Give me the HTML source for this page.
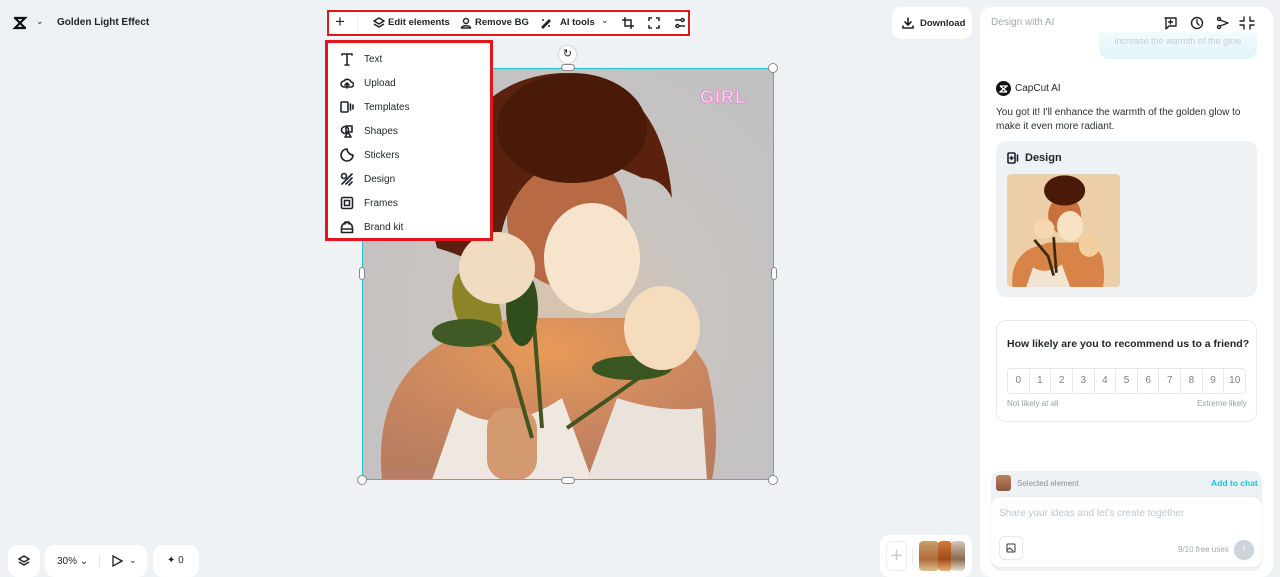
<!DOCTYPE html>
<html><head><meta charset="utf-8"><style>
*{box-sizing:border-box;margin:0;padding:0}
body{width:1280px;height:577px;background:#eff2f5;font-family:"Liberation Sans",sans-serif;position:relative;overflow:hidden;color:#1f2329}
.abs{position:absolute}
.card{background:#fff;border-radius:10px}
.ic{stroke:#1f2329;fill:none;stroke-width:1.6;stroke-linecap:round;stroke-linejoin:round}
.menu div{display:flex;align-items:center;height:24px;font-size:10px;padding-left:12px}
.menu svg{width:14px;height:14px;margin-right:10px}
.nums{display:flex;border:1px solid #e6e8eb;border-radius:4px;height:26px}
.nums span{flex:1;border-left:1px solid #e6e8eb;text-align:center;line-height:24px;font-size:10px;color:#7a8089}
.nums span:first-child{border-left:none}
.tb{position:absolute;top:17px;font-size:9.5px;font-weight:bold;white-space:nowrap}
</style></head><body>

<!-- top-left -->
<div class="abs" style="left:2px;top:8px;width:148px;height:31px;background:#eef1f4;border-radius:8px"></div>
<svg class="abs" style="left:12px;top:16px" width="16" height="14" viewBox="0 0 16 14"><path d="M2 2h11L3 12h11M3 2l10 10" stroke="#111" stroke-width="2.2" fill="none"/></svg>
<div class="abs" style="left:36px;top:16px;font-size:9px">&#8964;</div>
<div class="abs" style="left:57px;top:17px;font-size:10px;font-weight:bold">Golden Light Effect</div>

<!-- toolbar -->
<div class="abs card" style="left:326px;top:9px;width:366px;height:29px;border-radius:8px"></div>
<div class="abs" style="left:327px;top:10px;width:363px;height:26px;border:2px solid #e5151b"></div>
<div class="abs" style="left:357px;top:13px;width:1px;height:20px;background:#eef0f2"></div>
<div class="abs" style="left:335px;top:12px;font-size:17px">+</div>
<svg class="abs" style="left:373px;top:17px" width="12" height="12" viewBox="0 0 12 12" class="ic"><path d="M6 1l5 3-5 3-5-3zM1 7l5 3 5-3" stroke="#1f2329" stroke-width="1.5" fill="none"/></svg>
<div class="tb" style="left:388px">Edit elements</div>
<svg class="abs" style="left:460px;top:17px" width="12" height="12" viewBox="0 0 12 12"><circle cx="6" cy="4" r="2.5" stroke="#1f2329" stroke-width="1.4" fill="none"/><path d="M1.5 11c0-3 9-3 9 0z" stroke="#1f2329" stroke-width="1.4" fill="none"/></svg>
<div class="tb" style="left:475px">Remove BG</div>
<svg class="abs" style="left:540px;top:17px" width="12" height="12" viewBox="0 0 12 12"><path d="M2 10l7-7 1 1-7 7zM2 3h2M8 9h2" stroke="#1f2329" stroke-width="1.4" fill="none"/></svg>
<div class="tb" style="left:560px">AI tools</div>
<div class="abs" style="left:601px;top:15px;font-size:9px">&#8964;</div>
<svg class="abs" style="left:622px;top:17px" width="12" height="12" viewBox="0 0 12 12"><path d="M3 0v9h9M0 3h9v9" stroke="#1f2329" stroke-width="1.5" fill="none"/></svg>
<svg class="abs" style="left:648px;top:17px" width="12" height="12" viewBox="0 0 12 12"><path d="M1 4V1h3M8 1h3v3M11 8v3H8M4 11H1V8" stroke="#1f2329" stroke-width="1.5" fill="none"/></svg>
<svg class="abs" style="left:674px;top:17px" width="12" height="12" viewBox="0 0 12 12"><path d="M1 3h6M10 3h1M1 9h1M5 9h6" stroke="#1f2329" stroke-width="1.4" fill="none"/><circle cx="8.5" cy="3" r="1.5" stroke="#1f2329" stroke-width="1.4" fill="none"/><circle cx="3.5" cy="9" r="1.5" stroke="#1f2329" stroke-width="1.4" fill="none"/></svg>

<!-- canvas image -->
<div class="abs" style="left:420px;top:48px;font-size:8px;color:#b0b5bb">age.png</div>
<svg class="abs" style="left:362px;top:68px" width="412" height="412" viewBox="0 0 412 412">
<defs><radialGradient id="bg" cx="0.5" cy="0.6" r="0.7"><stop offset="0" stop-color="#d9c3ad"/><stop offset="0.45" stop-color="#c8c4c1"/><stop offset="1" stop-color="#c2c1c2"/></radialGradient>
<radialGradient id="sk" cx="0.5" cy="0.2" r="0.8"><stop offset="0" stop-color="#e89a58"/><stop offset="0.6" stop-color="#c98660"/><stop offset="1" stop-color="#b97d60"/></radialGradient></defs>
<rect width="412" height="412" fill="url(#bg)"/>
<path d="M20 412 Q10 310 90 270 L150 250 L290 250 Q330 270 345 300 Q360 360 350 412z" fill="url(#sk)"/>
<ellipse cx="205" cy="150" rx="60" ry="70" fill="#b86a44"/>
<path d="M70 160 Q90 10 200 5 Q300 10 310 130 Q300 110 280 110 Q200 70 160 120 Q130 160 140 210 Q110 190 75 180z" fill="#5a220e"/>
<ellipse cx="210" cy="60" rx="75" ry="55" fill="#4a1a08"/>
<path d="M70 412 L95 340 Q140 370 200 330 L230 412z" fill="#efe8e1"/>
<path d="M225 412 L255 330 Q300 345 340 340 L345 412z" fill="#eae3dc"/>
<rect x="125" y="340" width="50" height="72" rx="20" fill="#d39a70"/>
<path d="M100 240 L150 300 L170 370 M170 230 L180 360 M320 280 L205 360" stroke="#43541f" stroke-width="4" fill="none"/>
<ellipse cx="25" cy="240" rx="0" ry="0"/>
<ellipse cx="35" cy="50" rx="0" ry="0"/>
<ellipse cx="115" cy="240" rx="22" ry="40" fill="#8c8426" transform="rotate(-20 115 240)"/>
<ellipse cx="105" cy="265" rx="35" ry="14" fill="#3f5a24"/>
<ellipse cx="160" cy="240" rx="16" ry="38" fill="#2f4e1c"/>
<ellipse cx="270" cy="300" rx="40" ry="12" fill="#3a5620"/>
<ellipse cx="135" cy="200" rx="38" ry="36" fill="#f1dcc2"/>
<ellipse cx="230" cy="190" rx="48" ry="55" fill="#f6e4cd"/>
<ellipse cx="300" cy="260" rx="38" ry="42" fill="#f4dcbd"/>
<text x="338" y="35" font-family="Liberation Sans" font-weight="bold" font-size="18" fill="#f6d8ef" stroke="#d889c6" stroke-width="0.8" letter-spacing="1">GIRL</text>
</svg>
<div class="abs" style="left:362px;top:68px;width:412px;height:412px;border:1px solid #22c3d6"></div>
<div class="abs" style="left:768px;top:63px;width:10px;height:10px;border-radius:50%;background:#fff;border:1px solid #888"></div>
<div class="abs" style="left:357px;top:475px;width:10px;height:10px;border-radius:50%;background:#fff;border:1px solid #888"></div>
<div class="abs" style="left:768px;top:475px;width:10px;height:10px;border-radius:50%;background:#fff;border:1px solid #888"></div>
<div class="abs" style="left:561px;top:64px;width:14px;height:7px;border-radius:4px;background:#fff;border:1px solid #888"></div>
<div class="abs" style="left:561px;top:477px;width:14px;height:7px;border-radius:4px;background:#fff;border:1px solid #888"></div>
<div class="abs" style="left:359px;top:267px;width:6px;height:13px;border-radius:4px;background:#fff;border:1px solid #888"></div>
<div class="abs" style="left:771px;top:267px;width:6px;height:13px;border-radius:4px;background:#fff;border:1px solid #888"></div>
<div class="abs" style="left:559px;top:46px;width:17px;height:17px;border-radius:50%;background:#fff;box-shadow:0 0 2px #aaa;font-size:11px;text-align:center;line-height:17px">&#8635;</div>

<!-- menu -->
<div class="abs menu" style="left:325px;top:40px;width:168px;height:201px;background:#fff;border:3px solid #e5151b;padding-top:4px">
<div><svg viewBox="0 0 14 14" class="ic"><path d="M2 3V2h10v1M7 2v11M5 13h4"/></svg>Text</div>
<div><svg viewBox="0 0 14 14" class="ic"><path d="M4 11a3 3 0 010-6 4 4 0 017 1 2.5 2.5 0 010 5zM7 12V7M5 9l2-2 2 2"/></svg>Upload</div>
<div><svg viewBox="0 0 14 14" class="ic"><rect x="1" y="2" width="7" height="10" rx="1"/><path d="M10.5 4v6M13 5v4"/></svg>Templates</div>
<div><svg viewBox="0 0 14 14" class="ic"><circle cx="5" cy="6" r="3.5"/><rect x="6" y="2" width="6" height="6"/><path d="M5 13l3-5 3 5z"/></svg>Shapes</div>
<div><svg viewBox="0 0 14 14" class="ic"><path d="M7 1a6 6 0 106 6c-3 0-6-3-6-6z"/></svg>Stickers</div>
<div><svg viewBox="0 0 14 14" class="ic"><circle cx="4" cy="4" r="2.5"/><path d="M2 12l10-10M6 12l6-6M9 13l3-3"/></svg>Design</div>
<div><svg viewBox="0 0 14 14" class="ic"><rect x="1.5" y="1.5" width="11" height="11" rx="1.5"/><rect x="4.5" y="4.5" width="5" height="5"/></svg>Frames</div>
<div><svg viewBox="0 0 14 14" class="ic"><path d="M1.5 12.5h11V8a5.5 5.5 0 00-11 0zM1.5 9h11M5 4V2h4v2"/></svg>Brand kit</div>
</div>

<!-- download -->
<div class="abs card" style="left:892px;top:7px;width:80px;height:32px"></div>
<div class="abs" style="left:902px;top:17px;font-size:9.5px;font-weight:bold;display:flex;align-items:center;gap:6px"><svg width="12" height="12" viewBox="0 0 12 12" class="ic"><path d="M6 1v7M3 5l3 3 3-3M1 9v2h10V9"/></svg>Download</div>

<!-- right panel -->
<div class="abs card" style="left:980px;top:7px;width:293px;height:570px;border-radius:12px"></div>
<div class="abs" style="left:991px;top:17px;font-size:10px;color:#a3a8ae">Design with AI</div>
<svg class="abs" style="left:1164px;top:16px" width="96" height="14" viewBox="0 0 96 14">
<g class="ic" style="stroke-width:1.4"><path d="M1 2h11v8H5l-3 3V2zM6.5 4v4M4.5 6h4"/><circle cx="33" cy="7" r="5.5"/><path d="M33 4v3l2 2"/><circle cx="55" cy="3" r="1.5"/><circle cx="55" cy="11" r="1.5"/><path d="M56 4l8 3-8 3"/><path d="M80 1v4h-4M86 1v4h4M80 13V9h-4M86 13V9h4"/></g></svg>
<div class="abs" style="left:1099px;top:32px;width:158px;height:27px;border-radius:0 0 10px 10px;background:linear-gradient(#f4fbfd,#dff4f8);font-size:9px;color:#c8d0d6;text-align:center;padding-top:4px">increase the warmth of the glow</div>
<div class="abs" style="left:996px;top:81px;width:15px;height:15px;border-radius:50%;background:#111"></div>
<svg class="abs" style="left:999px;top:85px" width="9" height="8" viewBox="0 0 9 8"><path d="M1 1h7L1 7h7M1 1l7 6" stroke="#fff" stroke-width="1.3" fill="none"/></svg>
<div class="abs" style="left:1015px;top:83px;font-size:10px">CapCut AI</div>
<div class="abs" style="left:996px;top:106px;width:270px;font-size:10px;line-height:14px;color:#2b2f33">You got it! I'll enhance the warmth of the golden glow to make it even more radiant.</div>
<div class="abs" style="left:996px;top:141px;width:261px;height:156px;background:#eff2f5;border-radius:10px"></div>
<div class="abs" style="left:1007px;top:152px;font-size:11px;font-weight:bold;display:flex;align-items:center;gap:6px"><svg width="12" height="12" viewBox="0 0 12 12" class="ic"><rect x="1" y="1" width="7" height="10" rx="1"/><path d="M10.5 3v6M3 6h3M4.5 4.5v3"/></svg>Design</div>
<svg class="abs" style="left:1007px;top:174px;border-radius:4px" width="113" height="113" viewBox="0 0 412 412">
<rect width="412" height="412" fill="#eccfa9"/>
<path d="M20 412 Q10 310 90 270 L150 250 L290 250 Q330 270 345 300 Q360 360 350 412z" fill="#d88448"/>
<ellipse cx="210" cy="150" rx="60" ry="70" fill="#c9713c"/>
<ellipse cx="210" cy="60" rx="75" ry="55" fill="#4a1a08"/>
<path d="M70 412 L95 340 Q140 370 200 330 L230 412z" fill="#f3e3d3"/>
<path d="M100 240 L150 300 L170 370 M170 230 L180 360" stroke="#3a2a10" stroke-width="10" fill="none"/>
<ellipse cx="135" cy="200" rx="38" ry="36" fill="#f5d7b0"/><ellipse cx="230" cy="190" rx="48" ry="55" fill="#f8e2c4"/><ellipse cx="300" cy="260" rx="38" ry="42" fill="#f3cf9f"/>
</svg>

<div class="abs" style="left:996px;top:320px;width:261px;height:102px;border:1px solid #e8eaed;border-radius:10px"></div>
<div class="abs" style="left:1007px;top:338px;font-size:10.5px;font-weight:bold;color:#1f2329;white-space:nowrap">How likely are you to recommend us to a friend?</div>
<div class="abs nums" style="left:1007px;top:368px;width:239px"><span>0</span><span>1</span><span>2</span><span>3</span><span>4</span><span>5</span><span>6</span><span>7</span><span>8</span><span>9</span><span>10</span></div>
<div class="abs" style="left:1007px;top:399px;font-size:8px;color:#9ba0a6">Not likely at all</div>
<div class="abs" style="left:1197px;top:399px;font-size:8px;color:#9ba0a6">Extreme likely</div>

<div class="abs" style="left:991px;top:471px;width:271px;height:100px;background:#eff2f5;border-radius:10px"></div>
<div class="abs" style="left:996px;top:475px;width:15px;height:16px;border-radius:3px;background:linear-gradient(#c08060,#8a5a3a)"></div>
<div class="abs" style="left:1017px;top:479px;font-size:8px;color:#8a9097">Selected element</div>
<div class="abs" style="left:1211px;top:478px;font-size:8.5px;color:#18c6dc;font-weight:bold">Add to chat</div>
<div class="abs" style="left:991px;top:497px;width:271px;height:70px;background:#fff;border-radius:10px;box-shadow:0 0 2px #e0e3e6"></div>
<div class="abs" style="left:999px;top:508px;font-size:10px;color:#c1c6cb">Share your ideas and let's create together</div>
<div class="abs" style="left:999px;top:536px;width:24px;height:24px;border:1px solid #e6e8eb;border-radius:6px"></div>
<svg class="abs" style="left:1006px;top:543px" width="10" height="10" viewBox="0 0 10 10"><rect x="1" y="1" width="8" height="8" rx="1" stroke="#333" fill="none"/><path d="M1 7l3-2 3 3" stroke="#333" fill="none"/></svg>
<div class="abs" style="left:1178px;top:545px;font-size:8px;color:#a3a8ae">9/10 free uses</div>
<div class="abs" style="left:1234px;top:540px;width:20px;height:20px;border-radius:50%;background:#cdd3da;color:#fff;font-size:10px;text-align:center;line-height:20px">&#8593;</div>

<!-- bottom -->
<div class="abs card" style="left:8px;top:545px;width:32px;height:32px"></div>
<svg class="abs" style="left:18px;top:555px" width="12" height="12" viewBox="0 0 12 12"><path d="M6 1l5 3-5 3-5-3zM1 7l5 3 5-3" stroke="#222" stroke-width="1.4" fill="none"/></svg>
<div class="abs card" style="left:45px;top:545px;width:102px;height:32px"></div>
<div class="abs" style="left:57px;top:556px;font-size:10px">30% &#8964;</div>
<div class="abs" style="left:99px;top:555px;width:1px;height:12px;background:#e5e7ea"></div>
<svg class="abs" style="left:111px;top:555px" width="12" height="12" viewBox="0 0 12 12"><path d="M2 1l9 5-9 5z" stroke="#222" stroke-width="1.3" fill="none"/></svg>
<div class="abs" style="left:129px;top:555px;font-size:9px">&#8964;</div>
<div class="abs card" style="left:153px;top:545px;width:46px;height:32px"></div>
<div class="abs" style="left:167px;top:555px;font-size:10px">&#10022; 0</div>

<div class="abs card" style="left:880px;top:535px;width:92px;height:42px"></div>
<div class="abs" style="left:886px;top:541px;width:21px;height:30px;border:1px solid #eceef0;border-radius:6px;color:#c7ccd1;font-size:20px;text-align:center;line-height:28px">+</div>
<div class="abs" style="left:912px;top:548px;width:1px;height:16px;background:#e5e7ea"></div>
<div class="abs" style="left:919px;top:541px;width:20px;height:30px;border-radius:4px;background:linear-gradient(#c9a070,#b06a35 60%,#e0c090)"></div>
<div class="abs" style="left:938px;top:541px;width:14px;height:30px;border-radius:4px;background:linear-gradient(#d07a3a,#a04a18 60%,#f0b070)"></div>
<div class="abs" style="left:951px;top:541px;width:14px;height:30px;border-radius:4px;background:linear-gradient(#d5c8b8,#8a6a50 60%,#e8e0d0)"></div>
</body></html>
